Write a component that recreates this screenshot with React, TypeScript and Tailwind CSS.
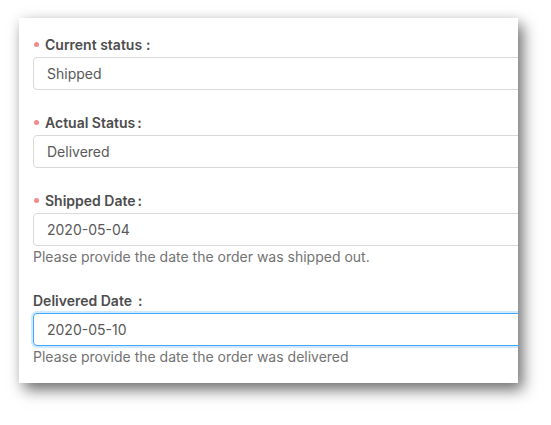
import * as React from 'react'

interface FieldProps {
  label: string
  colonGap: string
  value: string
  required?: boolean
  focused?: boolean
  help?: string
}

const Field = ({ label, colonGap, value, required, focused, help }: FieldProps) => (
  <div className="flex flex-col">
    <label className="flex items-center h-[22px] mb-[2px] font-semibold text-[14px] text-[#4d4d4d]">
      {required ? <span className="inline-block w-[5px] h-[5px] rounded-full bg-[#f58a8a] ml-[1px] mr-[6px]" /> : null}
      <span>{label}</span>
      <span className={colonGap}>:</span>
    </label>
    <div
      className={
        'w-[520px] h-[33px] flex items-center px-[13px] rounded-[4px] bg-white text-[14px] text-[#595959] border ' +
        (focused
          ? 'border-[#40a9ff] shadow-[0_0_0_2px_rgba(24,144,255,0.2)]'
          : 'border-[#d9d9d9]')
      }
    >
      {value}
    </div>
    {help ? <div className="h-[22px] leading-[22px] text-[14px] text-[#737373]">{help}</div> : null}
  </div>
)

export default function App() {
  return (
    <div className="w-[551px] h-[425px] bg-white pt-[18px] pl-[19px] font-['Inter',sans-serif]">
      <div className="w-[499px] overflow-hidden bg-white pt-[15px] pl-[14px] pb-[15px] flex flex-col gap-[21px] shadow-[5px_7px_14px_rgba(0,0,0,0.55),0_0_12px_rgba(0,0,0,0.06)]">
        <Field label="Current status" colonGap="ml-[4px]" value="Shipped" required />
        <Field label="Actual Status" colonGap="ml-[2px]" value="Delivered" required />
        <Field label="Shipped Date" colonGap="ml-[2px]" value="2020-05-04" required help="Please provide the date the order was shipped out." />
        <Field label="Delivered Date" colonGap="ml-[6px]" value="2020-05-10" focused help="Please provide the date the order was delivered" />
      </div>
    </div>
  )
}
